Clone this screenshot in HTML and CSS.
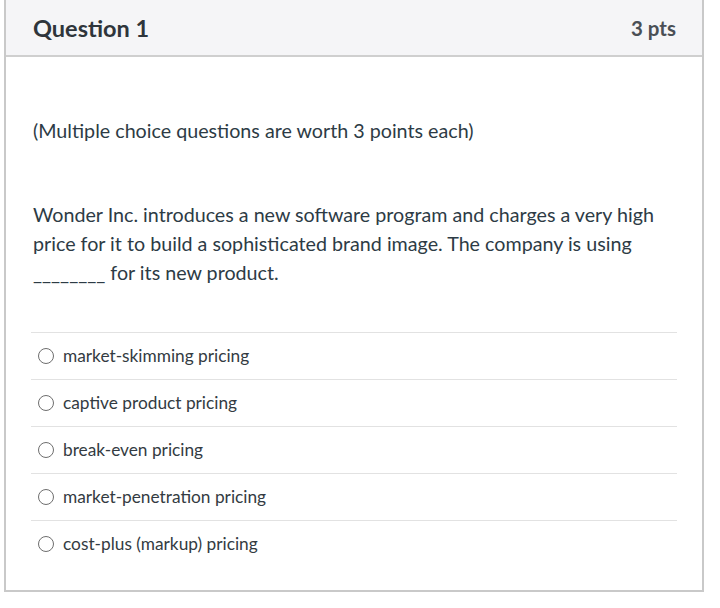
FILE: index.html
```html
<!DOCTYPE html>
<html>
<head>
<meta charset="utf-8">
<link rel="stylesheet" href="styles.css">
</head>
<body>
<div class="question">
  <div class="q-header">
    <span class="q-title">Question 1</span>
    <span class="q-pts">3 pts</span>
  </div>
  <div class="q-body">
    <p class="q-note">(Multiple choice questions are worth 3 points each)</p>
    <p class="q-text">Wonder Inc. introduces a new software program and charges a very high price for it to build a sophisticated brand image. The company is using ________ for its new product.</p>
    <div class="answers">
      <label class="answer"><span class="radio"></span><span class="answer-text">market-skimming pricing</span></label>
      <label class="answer"><span class="radio"></span><span class="answer-text">captive product pricing</span></label>
      <label class="answer"><span class="radio"></span><span class="answer-text">break-even pricing</span></label>
      <label class="answer"><span class="radio"></span><span class="answer-text">market-penetration pricing</span></label>
      <label class="answer"><span class="radio"></span><span class="answer-text">cost-plus (markup) pricing</span></label>
    </div>
  </div>
</div>
</body>
</html>
```
FILE: styles.css
```css
html, body {
  margin: 0;
  padding: 0;
  background: #ffffff;
}
body {
  font-family: Lato, "Open Sans", sans-serif;
  color: #2d3b45;
}
.question {
  margin-left: 4px;
  width: 696px;
  border: 2px solid #c9c9c9;
  border-top: none;
  height: 590px;
  box-sizing: content-box;
}
.q-header {
  display: flex;
  justify-content: space-between;
  align-items: center;
  height: 55px;
  background: #f5f5f7;
  border-bottom: 2px solid #cfcfcf;
  padding: 0 26px 0 27px;
}
.q-title {
  font-weight: 700;
  font-size: 23.5px;
  color: #2f353b;
}
.q-pts {
  font-weight: 700;
  font-size: 20.5px;
  color: #4a4f55;
}
.q-body {
  padding: 0 25px;
}
.q-note {
  margin: 0;
  padding: 59px 0 0 2px;
  font-size: 19.7px;
  line-height: 29px;
}
.q-text {
  margin: 0;
  padding: 55px 0 0 2px;
  font-size: 19.7px;
  line-height: 29px;
}
.answers {
  margin-top: 45px;
}
.answer {
  display: flex;
  align-items: center;
  gap: 9px;
  height: 45px;
  padding-bottom: 1px;
  border-top: 1px solid #e2e2e2;
  padding-left: 7px;
  font-size: 17.3px;
}
.radio {
  width: 14px;
  height: 14px;
  border: 1px solid #6e6e6e;
  border-radius: 50%;
  flex-shrink: 0;
}
.answer-text {
  color: #333b42;
}
```
